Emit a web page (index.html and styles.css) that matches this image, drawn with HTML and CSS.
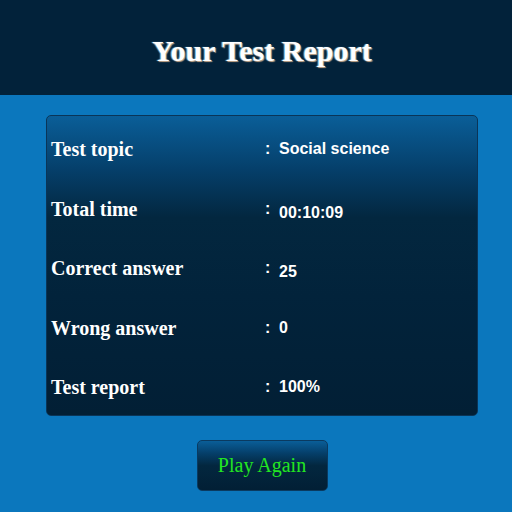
FILE: index.html
```html
<!DOCTYPE html>
<html>
<head>
<meta charset="utf-8">
<link rel="stylesheet" href="styles.css">
</head>
<body>
<header class="top">
  <h1 class="title">Your Test Report</h1>
</header>
<main class="main">
  <section class="card">
    <div class="row">
      <div class="label">Test topic</div>
      <div class="colon">:</div>
      <div class="value">Social science</div>
    </div>
    <div class="row">
      <div class="label">Total time</div>
      <div class="colon">:</div>
      <div class="value low">00:10:09</div>
    </div>
    <div class="row">
      <div class="label">Correct answer</div>
      <div class="colon">:</div>
      <div class="value low">25</div>
    </div>
    <div class="row">
      <div class="label">Wrong answer</div>
      <div class="colon">:</div>
      <div class="value">0</div>
    </div>
    <div class="row">
      <div class="label">Test report</div>
      <div class="colon">:</div>
      <div class="value">100%</div>
    </div>
  </section>
  <button class="play">Play Again</button>
</main>
</body>
</html>
```
FILE: styles.css
```css
html, body {
  margin: 0;
  padding: 0;
}
body {
  width: 512px;
  height: 512px;
  background: #0b77bd;
  overflow: hidden;
  font-family: "Liberation Serif", "Times New Roman", serif;
}
.top {
  background: #02223a;
  height: 95px;
  box-sizing: border-box;
  padding-left: 12px;
  display: flex;
  align-items: center;
  justify-content: center;
}
.title {
  margin: 0;
  padding-top: 6px;
  color: #fff;
  font-size: 30px;
  font-weight: bold;
  text-shadow: 1px 1px 1px #c9a98a, -1px 0 1px #6fb4e6;
}
.main {
  display: flex;
  flex-direction: column;
  align-items: center;
  padding-top: 20px;
  padding-left: 12px;
}
.card {
  width: 432px;
  height: 301px;
  border: 1px solid #0a3558;
  border-radius: 5px;
  background: linear-gradient(to bottom, #0a5e98 0%, #053f6a 18%, #03273f 34%, #02233b 60%, #021f35 100%);
  box-sizing: border-box;
  padding: 21px 0 0 4px;
  display: flex;
  flex-direction: column;
  gap: 35.5px;
}
.row {
  display: flex;
  align-items: flex-start;
  height: 24px;
  color: #fff;
}
.label {
  width: 214px;
  font-size: 20px;
  font-weight: bold;
  line-height: 24px;
}
.colon {
  width: 14px;
  font-family: "Liberation Sans", Arial, sans-serif;
  font-weight: bold;
  font-size: 16px;
  line-height: 24px;
}
.value {
  font-family: "Liberation Sans", Arial, sans-serif;
  font-weight: bold;
  font-size: 16px;
  line-height: 24px;
}
.value.low {
  padding-top: 4px;
}
.play {
  margin-top: 24px;
  width: 131px;
  height: 51px;
  border: 1px solid #0a3a60;
  border-radius: 5px;
  background: linear-gradient(to bottom, #0a5e98 0%, #053f6a 25%, #03273f 50%, #021f35 100%);
  color: #22e622;
  font-family: "Liberation Serif", "Times New Roman", serif;
  font-size: 20px;
  padding: 0;
  cursor: pointer;
}
```
